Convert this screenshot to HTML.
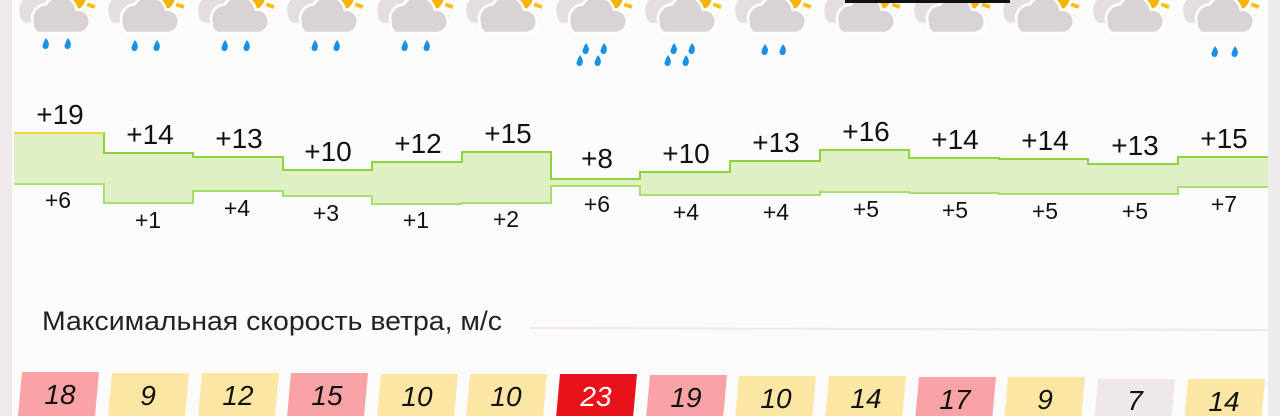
<!DOCTYPE html>
<html><head><meta charset="utf-8"><style>
html,body{margin:0;padding:0;background:#fbfafb;width:1280px;height:416px;overflow:hidden;font-family:"Liberation Sans",sans-serif}
</style></head><body>
<svg width="1280" height="416" xmlns="http://www.w3.org/2000/svg" style="position:absolute;left:0;top:0">
<defs>
<g id="ic">
 <circle cx="22" cy="2" r="11" fill="#f4b400"/>
 <path d="M34 8 L40 10 M30 14 L36 18" stroke="#f4c020" stroke-width="3"/>
 <path d="M-18 14 a10 10 0 0 1 12 -12 a13 13 0 0 1 22 4 a8 8 0 0 1 0 16 h-30 a8 8 0 0 1 -4 -8z" fill="#e4dee0"/>
 <path d="M-8 22 a11 11 0 0 1 10 -14 a13 13 0 0 1 24 4 a9 9 0 0 1 2 18 h-32 a8 8 0 0 1 -4 -8z" fill="#d9d3d5" stroke="#fff" stroke-width="2"/>
</g>
<g id="dr"><path d="M0 -6 q4 5 2.5 8.5 a3 3 0 0 1 -6 -1 q1 -4 3.5 -7.5z" fill="#1a8fe6"/></g>
</defs>
<rect x="0" y="0" width="12" height="416" fill="#f0e9ec"/>
<rect x="1268" y="0" width="12" height="416" fill="#eeebec"/>
<rect x="12" y="0" width="1256" height="416" fill="#fcfbfc"/>
<!-- icons -->
<g transform="translate(43,-6) scale(1.3)"><use href="#ic"/></g>
<g transform="translate(132,-6) scale(1.3)"><use href="#ic"/></g>
<g transform="translate(222,-6) scale(1.3)"><use href="#ic"/></g>
<g transform="translate(311,-6) scale(1.3)"><use href="#ic"/></g>
<g transform="translate(401,-6) scale(1.3)"><use href="#ic"/></g>
<g transform="translate(490,-6) scale(1.3)"><use href="#ic"/></g>
<g transform="translate(580,-6) scale(1.3)"><use href="#ic"/></g>
<g transform="translate(669,-6) scale(1.3)"><use href="#ic"/></g>
<g transform="translate(759,-6) scale(1.3)"><use href="#ic"/></g>
<g transform="translate(848,-6) scale(1.3)"><use href="#ic"/></g>
<g transform="translate(938,-6) scale(1.3)"><use href="#ic"/></g>
<g transform="translate(1027,-6) scale(1.3)"><use href="#ic"/></g>
<g transform="translate(1117,-6) scale(1.3)"><use href="#ic"/></g>
<g transform="translate(1207,-6) scale(1.3)"><use href="#ic"/></g>
<rect x="845" y="0" width="165" height="3" fill="#111"/>
<!-- drops -->
<g>
<use href="#dr" x="46" y="44"/><use href="#dr" x="68" y="44"/>
<use href="#dr" x="135" y="46"/><use href="#dr" x="157" y="46"/>
<use href="#dr" x="225" y="46"/><use href="#dr" x="247" y="46"/>
<use href="#dr" x="315" y="46"/><use href="#dr" x="337" y="46"/>
<use href="#dr" x="405" y="46"/><use href="#dr" x="427" y="46"/>
<use href="#dr" x="580" y="61"/><use href="#dr" x="598" y="61"/><use href="#dr" x="586" y="49"/><use href="#dr" x="604" y="49"/>
<use href="#dr" x="668" y="61"/><use href="#dr" x="686" y="61"/><use href="#dr" x="674" y="49"/><use href="#dr" x="692" y="49"/>
<use href="#dr" x="765" y="50"/><use href="#dr" x="783" y="50"/>
<use href="#dr" x="1215" y="52"/><use href="#dr" x="1235" y="52"/>
</g>
<!-- temperature band -->
<path d="M14 133 H104 V153 H193 V157 H283 V170 H372 V162 H462 V152 H551 V179 H640 V172 H730 V161 H820 V150 H909 V158 H999 V159 H1088 V164 H1178 V157 H1268 V187 H1178 V194 H1088 V194 H999 V193 H909 V192 H820 V195 H730 V195 H640 V186 H551 V203 H462 V204 H372 V196 H283 V191 H193 V203 H104 V184 H14 Z" fill="#dff0c4"/>
<path d="M14 133 H104 V153 H193 V157 H283 V170 H372 V162 H462 V152 H551 V179 H640 V172 H730 V161 H820 V150 H909 V158 H999 V159 H1088 V164 H1178 V157 H1268" fill="none" stroke="#8fd43a" stroke-width="2"/>
<path d="M14 184 H104 V203 H193 V191 H283 V196 H372 V204 H462 V203 H551 V186 H640 V195 H730 V195 H820 V192 H909 V193 H999 V194 H1088 V194 H1178 V187 H1268" fill="none" stroke="#a8dd70" stroke-width="2"/>
<path d="M14 133 H104" stroke="#e8d838" stroke-width="2"/>
<g font-size="28" fill="#111" text-anchor="middle">
<text x="60" y="124">+19</text><text x="150" y="144">+14</text><text x="239" y="148">+13</text><text x="328" y="161">+10</text>
<text x="418" y="153">+12</text><text x="508" y="143">+15</text><text x="597" y="168">+8</text><text x="686" y="163">+10</text>
<text x="776" y="152">+13</text><text x="866" y="141">+16</text><text x="955" y="149">+14</text><text x="1045" y="150">+14</text>
<text x="1135" y="155">+13</text><text x="1224" y="148">+15</text>
</g>
<g font-size="23" fill="#111" text-anchor="middle">
<text x="58" y="208">+6</text><text x="148" y="228">+1</text><text x="237" y="216">+4</text><text x="326" y="221">+3</text>
<text x="416" y="228">+1</text><text x="506" y="227">+2</text><text x="597" y="212">+6</text><text x="686" y="220">+4</text>
<text x="776" y="220">+4</text><text x="866" y="217">+5</text><text x="955" y="218">+5</text><text x="1045" y="219">+5</text>
<text x="1135" y="219">+5</text><text x="1224" y="212">+7</text>
</g>
<text x="42" y="330" font-size="27" fill="#222" textLength="460" lengthAdjust="spacingAndGlyphs">Максимальная скорость ветра, м/с</text>
<line x1="530" y1="328" x2="1268" y2="330" stroke="#f1e6e8" stroke-width="2"/>
<!-- wind boxes -->
<g>
<path d="M22 372 h77 l-4 44 h-77z" fill="#f9a3a7"/>
<path d="M112 373 h77 l-4 44 h-77z" fill="#fbe6a4"/>
<path d="M202 373 h77 l-4 44 h-77z" fill="#fbe6a4"/>
<path d="M291 373 h77 l-4 44 h-77z" fill="#f9a3a7"/>
<path d="M381 374 h77 l-4 44 h-77z" fill="#fbe6a4"/>
<path d="M470 374 h77 l-4 44 h-77z" fill="#fbe6a4"/>
<path d="M560 374 h77 l-4 44 h-77z" fill="#e8121a"/>
<path d="M650 375 h77 l-4 44 h-77z" fill="#f9a3a7"/>
<path d="M739 376 h77 l-4 44 h-77z" fill="#fbe6a4"/>
<path d="M829 376 h77 l-4 44 h-77z" fill="#fbe6a4"/>
<path d="M919 377 h77 l-4 44 h-77z" fill="#f9a3a7"/>
<path d="M1008 377 h77 l-4 44 h-77z" fill="#fbe6a4"/>
<path d="M1098 379 h77 l-4 44 h-77z" fill="#efe8eb"/>
<path d="M1188 379 h77 l-4 44 h-77z" fill="#fbe6a4"/>
</g>
<g font-size="28" font-style="italic" fill="#111" text-anchor="middle">
<text x="60" y="404">18</text><text x="148" y="405">9</text><text x="238" y="405">12</text><text x="327" y="405">15</text>
<text x="417" y="406">10</text><text x="506" y="406">10</text><text x="596" y="406" fill="#fff">23</text><text x="686" y="407">19</text>
<text x="776" y="408">10</text><text x="866" y="408">14</text><text x="955" y="409">17</text><text x="1045" y="409">9</text>
<text x="1135" y="410">7</text><text x="1224" y="411">14</text>
</g>
</svg>
</body></html>
